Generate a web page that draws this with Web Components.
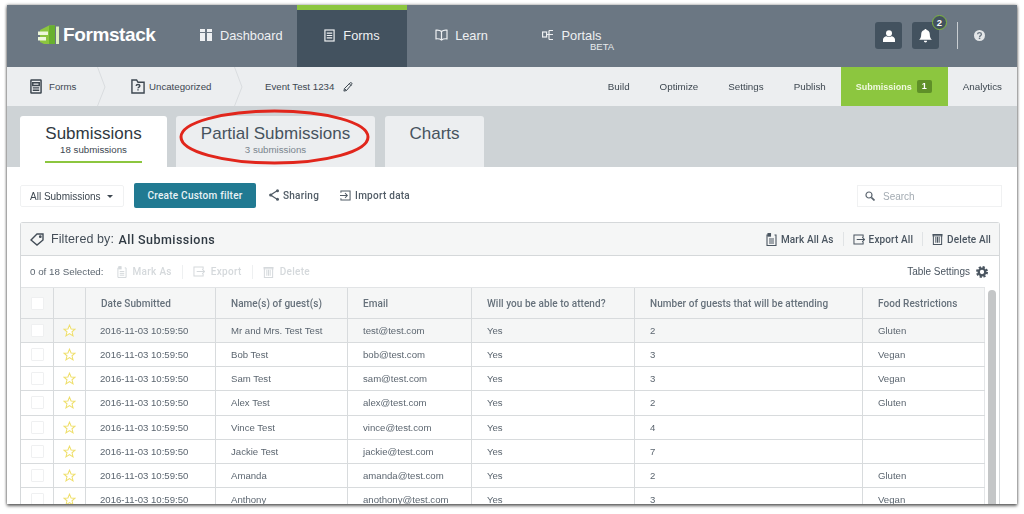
<!DOCTYPE html>
<html lang="en"><head><meta charset="utf-8"><title>Formstack</title>
<style>
html,body{margin:0;padding:0;background:#fff;height:514px;overflow:hidden}
body{font-family:"Liberation Sans",Arial,sans-serif}
</style></head><body>
<fs-app></fs-app>
<script>
const I={
dash:'<svg viewBox="0 0 12 12" fill="currentColor"><rect x="0" y="0" width="5" height="3"/><rect x="7" y="0" width="5" height="3"/><rect x="0" y="4" width="5" height="8"/><rect x="7" y="4" width="5" height="8"/></svg>',
doc:'<svg viewBox="0 0 12 14" fill="none" stroke="currentColor" stroke-width="1.3"><rect x="1" y="1" width="10" height="12"/><path d="M3 4.5h6M3 7h6M3 9.5h6"/></svg>',
docb:'<svg viewBox="0 0 13 16" fill="none" stroke="currentColor" stroke-width="1.6"><rect x="1" y="1" width="11" height="14" rx=".5"/><path d="M3 4h7v3H3zM3 9.5h7M3 12h7"/></svg>',
book:'<svg viewBox="0 0 13 12" fill="none" stroke="currentColor" stroke-width="1.2"><path d="M6.5 2.5C5 1.2 3 1 1 1.2v8.6c2-.2 4 0 5.5 1.2 1.5-1.2 3.500-1.400 5.500-1.200V1.200C10 1 8 1.200 6.500 2.500zM6.500 2.500V11"/></svg>',
portal:'<svg viewBox="0 0 12 12" fill="none" stroke="currentColor" stroke-width="1.200"><rect x=".6" y="3" width="4" height="5"/><path d="M4.600 5.500h2.400M7 1.500v9M7 1.500h4M7 5.500h4M7 10.500h4"/></svg>',
user:'<svg viewBox="0 0 12 12" fill="currentColor"><circle cx="6" cy="3.200" r="3"/><path d="M0 12V9.500C0 7.500 2 6.500 3.500 6.200 4.500 7 7.500 7 8.500 6.200 10 6.500 12 7.500 12 9.500V12z"/></svg>',
bell:'<svg viewBox="0 0 12 13" fill="currentColor"><path d="M6 0c.7 0 1 .5 1 1 2 .5 3 2 3 4 0 2.500.8 3.800 2 5H0c1.200-1.200 2-2.500 2-5 0-2 1-3.500 3-4 0-.5.3-1 1-1zM4.500 11h3a1.500 1.500 0 0 1-3 0z"/></svg>',
help:'<svg viewBox="0 0 12 12"><circle cx="6" cy="6" r="6" fill="currentColor"/><path d="M3.900 4.600C4 3.400 5 2.900 6 2.900c1.200 0 2.100.7 2.100 1.700 0 1.500-2 1.500-2 3" fill="none" stroke="#6b7783" stroke-width="1.500"/><rect x="5.200" y="8.300" width="1.700" height="1.600" fill="#6b7783"/></svg>',
folder:'<svg viewBox="0 0 15 16" fill="none" stroke="currentColor" stroke-width="1.500"><path d="M1 15V1h5l1.500 2.500H14V15z"/><path d="M5.500 7.300c.1-1 1-1.500 2-1.500s2 .6 2 1.500c0 1.300-2 1.300-2 2.700M7.500 11v1.300"/></svg>',
pencil:'<svg viewBox="0 0 11 11" fill="none" stroke="currentColor" stroke-width="1.100"><path d="M1 10l.6-2.800L7.800 1c.5-.5 1.200-.5 1.700 0s.5 1.200 0 1.700L3.800 9.400zM1.600 7.200l2.200 2.200M7 2l2.200 2.200"/></svg>',
share:'<svg viewBox="0 0 10 12" fill="none" stroke="currentColor" stroke-width="1.200"><path d="M8.500 1.500 1.500 6l7 4.500"/><g fill="currentColor" stroke="none"><circle cx="8.500" cy="1.700" r="1.500"/><circle cx="1.700" cy="6" r="1.600"/><circle cx="8.500" cy="10.300" r="1.500"/></g></svg>',
imp:'<svg viewBox="0 0 12 12" fill="none" stroke="currentColor" stroke-width="1.100"><path d="M1 3V1h10v10H1V9"/><path d="M0 6h8M5.500 3.500 8 6 5.500 8.500"/></svg>',
tag:'<svg viewBox="0 0 14 13" fill="none" stroke="currentColor" stroke-width="1.400"><path d="M1 7 7 1h6v6l-6 5z"/><circle cx="10.300" cy="3.700" r=".7"/></svg>',
mark:'<svg viewBox="0 0 11 13" fill="none" stroke="currentColor" stroke-width="1.100"><path d="M2.500 2H1v10.500h9V2H8.500"/><rect x="2" y=".6" width="2.500" height="2.500" fill="currentColor"/><path d="M3 6h5M3 8h5M3 10h5"/></svg>',
exp:'<svg viewBox="0 0 13 12" fill="none" stroke="currentColor" stroke-width="1.100"><path d="M11 3.500V1H1v10h10V8.500"/><path d="M4 6h8.500M10 3.500 12.500 6 10 8.500"/></svg>',
trash:'<svg viewBox="0 0 12 13" fill="none" stroke="currentColor" stroke-width="1.100"><path d="M.5 1.500h11M1.500 1.500V12.500h9V1.500M4.200 4v6.500M6 4v6.500M7.800 4v6.500"/><path d="M.5 3h11"/></svg>',
gear:'<svg viewBox="0 0 12 12"><circle cx="6" cy="6" r="3.300" fill="none" stroke="currentColor" stroke-width="2.300"/><circle cx="6" cy="6" r="5" fill="none" stroke="currentColor" stroke-width="2" stroke-dasharray="2.200 1.730"/></svg>',
search:'<svg viewBox="0 0 10 10" fill="none" stroke="currentColor"><circle cx="4" cy="4" r="3" stroke-width="1.200"/><path d="M6.300 6.300 9.500 9.500" stroke-width="1.700"/></svg>',
star:'<svg viewBox="0 0 14 14" fill="#fff" stroke="#efdf6a" stroke-width="1.100"><path d="M7 1.200 8.700 5.300 13 5.600 9.700 8.400 10.800 12.800 7 10.400 3.200 12.800 4.300 8.400 1 5.600 5.300 5.300z"/></svg>',
caret:'<svg viewBox="0 0 6 3" fill="currentColor"><path d="M0 0h6L3 3z"/></svg>'
};
function def(name,css,html,after){
  customElements.define(name,class extends HTMLElement{
    constructor(){super();const r=this.attachShadow({mode:'open'});
      r.innerHTML='<style>'+css+'</style>'+(typeof html==='function'?html(this):html);}
    connectedCallback(){ if(after) after(this); }
  });
}
customElements.define('fs-icon',class extends HTMLElement{
  connectedCallback(){
    if(this.shadowRoot)return;
    const r=this.attachShadow({mode:'open'});
    const w=this.getAttribute('w')||12,h=this.getAttribute('h')||12;
    r.innerHTML=`<style>:host{display:inline-block;flex:none;width:${w}px;height:${h}px;line-height:0}svg{width:100%;height:100%;display:block}</style>`+I[this.getAttribute('n')];
  }
});

/* ---------- top navigation ---------- */
def('fs-logo',`:host{display:flex;align-items:center;color:#fff;font-weight:700;font-size:19px;letter-spacing:-.4px;margin-left:30px;width:163px;flex:none;padding-bottom:2px;box-sizing:border-box}
svg{width:22px;height:22px;margin-right:4px;flex:none}`,
`<svg viewBox="0 0 22 22"><path d="M3 6 12 1.500h6V20H7l-4-2z" fill="#8cc63f"/><path d="M12 1.500h6V20h-6z" fill="#68b02f"/><path d="M1 7.500h10v3.500H1zM1 13h8v3.500H1z" fill="#eef8da"/><path d="M19 2.500h3V20h-3z" fill="#dcf0bd"/></svg><span>Formstack</span>`);
def('fs-nav-item',`:host{display:flex;align-items:center;justify-content:center;gap:8px;flex:none;height:62px;box-sizing:border-box;font-size:12.800px;color:#eef0f2;position:relative;padding-bottom:2px}
:host([active]){background:#43525f;border-top:5px solid #8cc63f;padding-bottom:7px}
::slotted(small){position:absolute;font-size:9.500px;left:74px;top:36px;color:#e8ebed}`,
`<slot></slot>`);
def('fs-icon-btn',`:host{display:flex;align-items:center;justify-content:center;width:27px;height:27px;border-radius:3px;background:#43525f;color:#fff;position:relative;flex:none}
.b{position:absolute;right:-8px;top:-7px;width:13px;height:13px;border-radius:50%;border:1.500px solid #7fb83e;background:#43525f;font-size:9.500px;font-weight:700;line-height:13px;text-align:center}`,
e=>`<slot></slot>`+(e.getAttribute('badge')?`<span class="b">${e.getAttribute('badge')}</span>`:''));
def('fs-topnav',`:host{display:flex;align-items:center;height:62px;background:#6b7783;flex:none}
.r{display:flex;align-items:center;margin-left:auto;padding-right:32px;margin-top:-1px}
.sep{width:1px;height:27px;background:#c9ced2;margin:0 15px 0 18px}
fs-icon-btn+fs-icon-btn{margin-left:10px}
.h{color:#e4e7e9;margin-left:1px}`,
`<fs-logo></fs-logo>
<fs-nav-item style="width:97px;justify-content:flex-start"><fs-icon n="dash"></fs-icon>Dashboard</fs-nav-item>
<fs-nav-item active style="width:110px"><fs-icon n="doc" w="11" h="13"></fs-icon>Forms</fs-nav-item>
<fs-nav-item style="width:109px;gap:7px"><fs-icon n="book" w="13" h="12"></fs-icon>Learn</fs-nav-item>
<fs-nav-item style="width:111px"><fs-icon n="portal" w="12" h="12"></fs-icon>Portals<small>BETA</small></fs-nav-item>
<div class="r"><fs-icon-btn><fs-icon n="user"></fs-icon></fs-icon-btn><fs-icon-btn badge="2"><fs-icon n="bell" w="13" h="14"></fs-icon></fs-icon-btn><div class="sep"></div><fs-icon class="h" n="help" w="11" h="11"></fs-icon></div>`);

/* ---------- sub navigation ---------- */
def('fs-subnav',`:host{display:flex;align-items:stretch;height:39px;background:#eceef0;flex:none;font-size:9.700px;color:#3d4750}
.c{display:flex;align-items:center;gap:7px}
.chev{width:9px;height:39px;flex:none;display:block}
.l{display:flex;margin-left:23px;color:#3d4750}
.ri{display:flex;align-items:stretch;margin-left:auto;font-size:9.800px}
.ri span{display:flex;align-items:center;margin-left:30px}
.sub{display:flex;align-items:center;background:#8cc63f;color:#f0f8e0;font-weight:700;font-size:9px;padding:0 16px 0 15px;margin-left:15px;gap:5px;width:76px;flex:none}
.n{width:15px;height:13px;background:#5f9028;color:#fff;border-radius:2px;text-align:center;line-height:13px;font-size:9px;flex:none}
.ri .a{margin-left:15px;margin-right:15px}`,
`<div class="l"><div class="c" style="width:67px"><fs-icon n="docb" w="12" h="15"></fs-icon>Forms</div><svg class="chev" viewBox="0 0 9 39" fill="none" stroke="#d9dcdf"><path d="M.5 0 8 20 .5 39"/></svg>
<div class="c" style="width:128px;padding-left:25px;box-sizing:border-box;gap:4px"><fs-icon n="folder" w="14" h="15"></fs-icon>Uncategorized</div><svg class="chev" viewBox="0 0 9 39" fill="none" stroke="#d9dcdf"><path d="M.5 0 8 20 .5 39"/></svg>
<div class="c" style="padding-left:22px;gap:9px">Event Test 1234<fs-icon n="pencil" w="10" h="10"></fs-icon></div></div>
<div class="ri"><span>Build</span><span>Optimize</span><span>Settings</span><span>Publish</span><div class="sub">Submissions<div class="n">1</div></div><span class="a">Analytics</span></div>`);

/* ---------- tabs ---------- */
def('fs-tab',`:host{display:flex;flex-direction:column;align-items:center;flex:none;height:51px;box-sizing:border-box;padding-top:7.500px;background:#eceef0;border-radius:3px 3px 0 0;color:#46535e;font-size:17px;line-height:20px}
:host([active]){background:#fff;color:#2f3942}
small{font-size:9.700px;line-height:13px;margin-top:-.5px;color:#7a858e}
:host([active]) small{color:#3d4750}
i{display:none;height:2px;background:#8cc63f;margin-top:5px;align-self:stretch;margin-left:25px;margin-right:25px}
:host([active]) i{display:block}`,
e=>`<span><slot></slot></span><small>${e.getAttribute('sub')||''}</small><i></i>`);
def('fs-tabs',`:host{display:flex;height:61px;background:#ced3d6;padding:10px 0 0 13px;box-sizing:border-box;gap:9px;flex:none;position:relative}
svg{position:absolute;left:172px;top:4px;width:192px;height:56px;overflow:visible}`,
`<fs-tab active sub="18 submissions" style="width:147px">Submissions</fs-tab>
<fs-tab sub="3 submissions" style="width:199px">Partial Submissions</fs-tab>
<fs-tab style="width:99px;margin-left:1px">Charts</fs-tab>
<svg viewBox="0 0 192 56" fill="none"><ellipse cx="95.500" cy="27" rx="93.500" ry="26" stroke="#e1261c" stroke-width="3"/></svg>`);

/* ---------- toolbar ---------- */
def('fs-toolbar',`:host{display:flex;align-items:center;height:25px;margin:16px 15px 0 13px;font-size:10px;color:#4a5560;flex:none}
.sel{display:flex;align-items:center;gap:6px;width:104px;height:22px;box-sizing:border-box;padding-left:9px;border:1px solid #f0f1f2;border-radius:2px;margin-top:1px;color:#3d4750}
.btn{display:flex;align-items:center;justify-content:center;width:122px;height:25px;margin-left:10px;background:#217a92;border-radius:2px;color:#e9f3f6;font:500 10px Roboto,"Liberation Sans",sans-serif;letter-spacing:.25px;padding-bottom:1px;box-sizing:border-box}
.a{display:flex;align-items:center;gap:4px;font:500 10px Roboto,"Liberation Sans",sans-serif;letter-spacing:.25px;color:#515c66;padding-bottom:1px}
.s{margin-left:auto;display:flex;align-items:center;gap:8px;width:145px;height:22px;box-sizing:border-box;padding-left:7px;border:1px solid #f0f1f2;margin-top:1px;color:#a3abb2}`,
`<div class="sel">All Submissions<fs-icon n="caret" w="6" h="3"></fs-icon></div>
<div class="btn">Create Custom filter</div>
<div class="a" style="margin-left:13px"><fs-icon n="share" w="10" h="12"></fs-icon>Sharing</div>
<div class="a" style="margin-left:21px"><fs-icon n="imp" w="11" h="11"></fs-icon>Import data</div>
<div class="s"><fs-icon n="search" w="10" h="10" style="color:#5c6670"></fs-icon>Search</div>`);

/* ---------- submissions table ---------- */
const COLS='33px 32px 130px 132px 124px 163px 228px 122px';
def('fs-panel',`:host{display:block;margin:14px 17px 0 13px;border:1px solid #d5d8da;border-radius:3px 3px 0 0;border-bottom:0}
.h{display:flex;align-items:center;height:32px;background:#f5f6f6;border-bottom:1px solid #d5d8da;padding:0 8px 0 9px;font-size:12.500px;letter-spacing:.1px;color:#444e58}
.h b{font:500 12.500px Roboto,"Liberation Sans",sans-serif;letter-spacing:.45px;color:#2f3942;margin-left:4.500px}
.h fs-icon{margin-right:7px}
.acts{margin-left:auto;display:flex;align-items:center;font:500 10px Roboto,"Liberation Sans",sans-serif;letter-spacing:.12px;color:#4a5560}
.acts span{display:flex;align-items:center;white-space:nowrap}
.acts fs-icon{margin-right:4px}
.acts u{display:block;width:1px;height:14px;background:#e0e3e5;margin:0 9px}
.s{display:flex;align-items:center;height:31px;box-sizing:border-box;padding:0 9px;font-size:9.800px;color:#5c6670}
.s span{display:flex;align-items:center;gap:6px;color:#d5d9dc;font:500 10px Roboto,"Liberation Sans",sans-serif;letter-spacing:.3px}
.s fs-icon{color:#d5d9dc}
.s u{display:block;width:1px;height:14px;background:#eef0f1;margin:0 10px}
.ts{margin-left:auto;display:flex;align-items:center;gap:6px;color:#4a5560;padding-right:2px;font-size:10px}
.ts fs-icon{color:#4a5560}
.w{display:flex;align-items:flex-start}
.g{width:964px;flex:none}
.r{display:grid;grid-template-columns:${COLS};height:24.140px;box-sizing:border-box;border-bottom:1px solid #d8dbdd;font-size:9.600px;color:#5c6670}
.r.hd{height:32px;background:#f5f6f6;font:500 10px Roboto,"Liberation Sans",sans-serif;letter-spacing:.05px;color:#66717b;border-top:1px solid #e2e4e6}
.r.hl{background:#f5f6f6}
.c{display:flex;align-items:center;padding-left:15px;border-right:1px solid #d8dbdd;white-space:nowrap;overflow:hidden}
.c:last-child{border-right-color:#e4e6e8}
.c.d{padding-left:14px}
.c.k,.c.t{padding:0;justify-content:center}
.cb{width:13px;height:13px;background:#fff;border:1px solid #eff0f1;border-radius:1px;box-sizing:border-box}
.sb{flex:none;width:14px;align-self:stretch}
.sb i{display:block;margin:3px 3px 0 3px;width:8px;height:300px;border-radius:4px 4px 0 0;background:#c4c6c7}`,
e=>{
  const rows=[['Mr and Mrs. Test Test','test@test.com','2','Gluten'],['Bob Test','bob@test.com','3','Vegan'],['Sam Test','sam@test.com','3','Vegan'],['Alex Test','alex@test.com','2','Gluten'],['Vince Test','vince@test.com','4',''],['Jackie Test','jackie@test.com','7',''],['Amanda','amanda@test.com','2','Gluten'],['Anthony','anothony@test.com','3','Vegan']];
  const body=rows.map((r,i)=>`<div class="r${i==0?' hl':''}"><div class="c k"><div class="cb"></div></div><div class="c t"><fs-icon n="star" w="13" h="13"></fs-icon></div><div class="c d">2016-11-03 10:59:50</div><div class="c">${r[0]}</div><div class="c">${r[1]}</div><div class="c">Yes</div><div class="c">${r[2]}</div><div class="c">${r[3]}</div></div>`).join('');
  return `<div class="h"><fs-icon n="tag" w="14" h="13"></fs-icon>Filtered by:<b>All Submissions</b>
<div class="acts"><span><fs-icon n="mark" w="11" h="13"></fs-icon>Mark All As</span><u></u><span><fs-icon n="exp" w="12" h="11"></fs-icon>Export All</span><u></u><span><fs-icon n="trash" w="11" h="12"></fs-icon>Delete All</span></div></div>
<div class="s">0 of 18 Selected:<span style="margin-left:13px"><fs-icon n="mark" w="10" h="12"></fs-icon>Mark As</span><u></u><span><fs-icon n="exp" w="12" h="11"></fs-icon>Export</span><u></u><span><fs-icon n="trash" w="11" h="12"></fs-icon>Delete</span>
<div class="ts">Table Settings<fs-icon n="gear" w="12" h="12"></fs-icon></div></div>
<div class="w"><div class="g"><div class="r hd"><div class="c k"><div class="cb"></div></div><div class="c t"></div><div class="c">Date Submitted</div><div class="c">Name(s) of guest(s)</div><div class="c">Email</div><div class="c">Will you be able to attend?</div><div class="c">Number of guests that will be attending</div><div class="c">Food Restrictions</div></div>${body}</div><div class="sb"><i></i></div></div>`;
});

def('fs-app',`:host{display:flex;flex-direction:column;width:1010px;height:499px;margin:5px 0 0 7px;background:#fff;overflow:hidden;box-shadow:0 2px 3px rgba(0,0,0,.55),0 0 3px rgba(0,0,0,.45);font-family:"Liberation Sans",Arial,sans-serif;filter:blur(.35px)}`,
`<fs-topnav></fs-topnav><fs-subnav></fs-subnav><fs-tabs></fs-tabs><fs-toolbar></fs-toolbar><fs-panel></fs-panel>`);
</script>
</body></html>
